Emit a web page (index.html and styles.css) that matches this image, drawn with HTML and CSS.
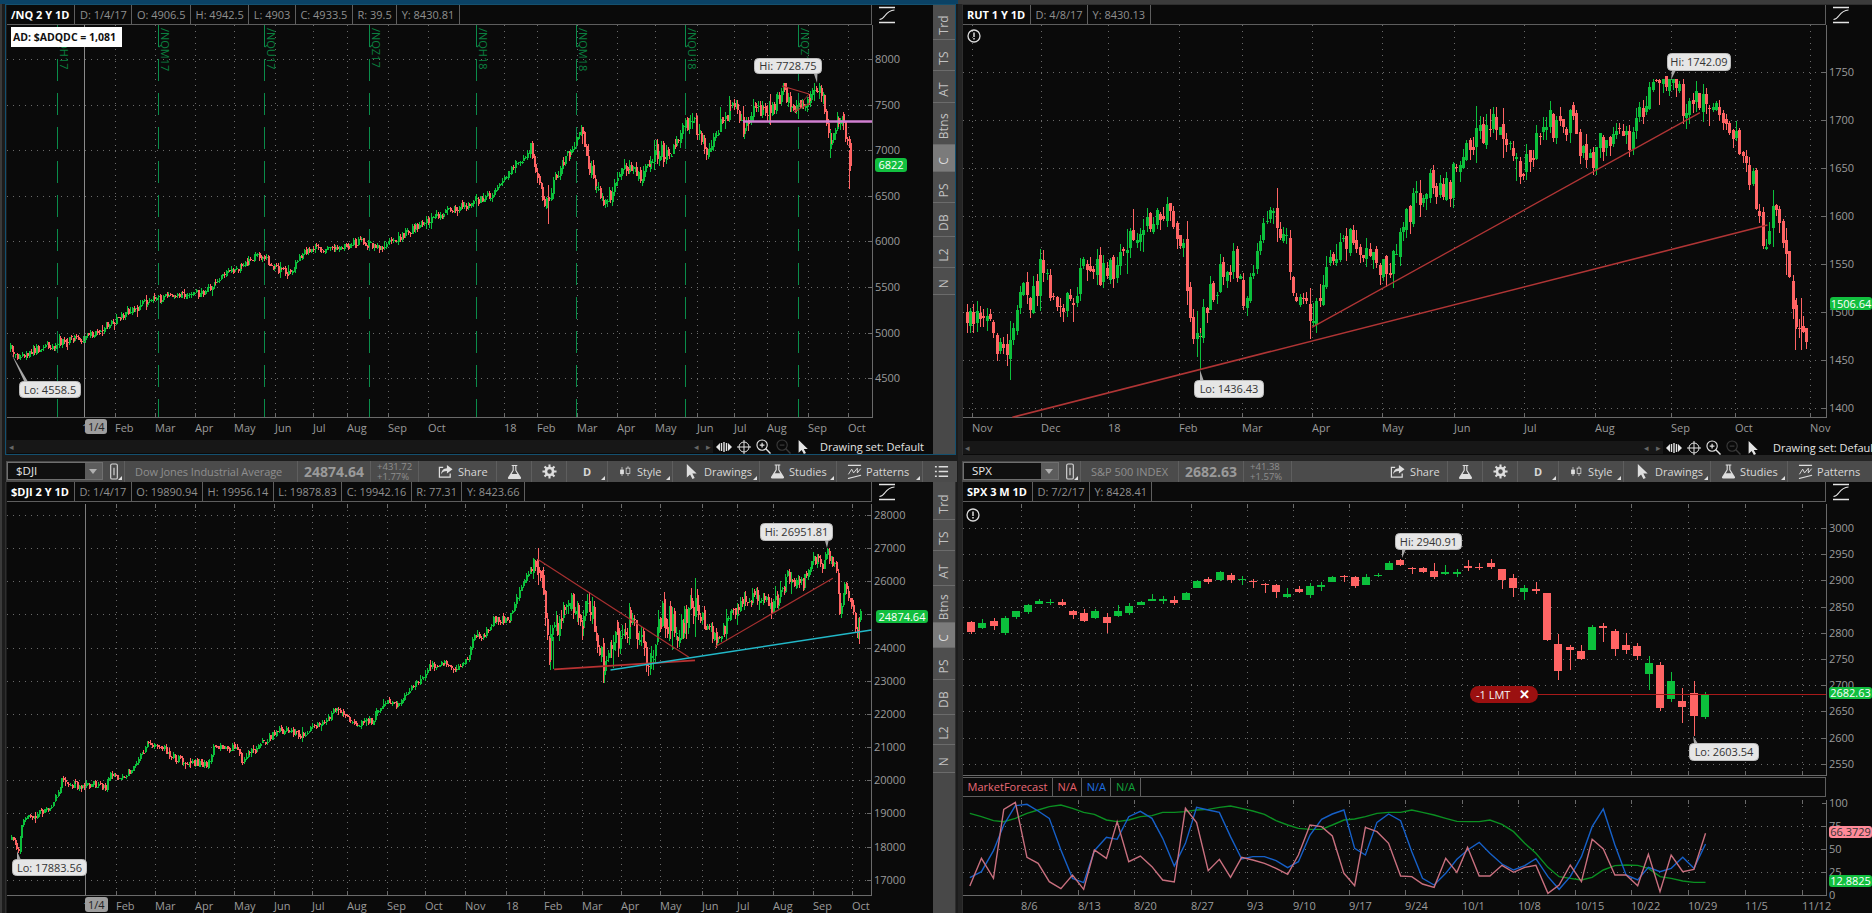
FILE: index.html
```html
<!DOCTYPE html>
<html lang="en">
<head>
<meta charset="utf-8">
<title>Charts</title>
<link rel="stylesheet" href="styles.css">
</head>
<body>
<svg class="sprite" aria-hidden="true">
  <symbol id="i-share" viewBox="0 0 16 16"><path d="M5.500 3.500H1.500v10.500h11.500v-4" fill="none" stroke="currentColor" stroke-width="1.300"/><path d="M9.500 1l6 4.500-6 4.500V7.500c-3 0-5 1-6.200 3.500.2-3.800 2.500-6.200 6.200-6.500z" fill="currentColor"/></symbol>
  <symbol id="i-flask" viewBox="0 0 16 16"><path d="M5 .5h6v1.200H10v4.300l4.800 7.600c.5.900 0 1.900-1 1.900H2.200c-1 0-1.500-1-1-1.900L6 6V1.700H5zM7.200 1.700v4.700L5 10h6L8.800 6.400V1.700z" fill="currentColor" fill-rule="evenodd"/><path d="M5 10h6l3 5H2z" fill="currentColor"/></symbol>
  <symbol id="i-gear" viewBox="0 0 16 16"><circle cx="8" cy="8" r="3.800" fill="none" stroke="currentColor" stroke-width="2.800"/><path d="M8 .5v3M8 12.500v3M.5 8h3M12.500 8h3M2.700 2.700l2.200 2.200M11.100 11.100l2.200 2.200M13.300 2.700l-2.200 2.200M4.900 11.100l-2.200 2.200" stroke="currentColor" stroke-width="2.200"/></symbol>
  <symbol id="i-candle" viewBox="0 0 16 16"><path d="M4 2v12M12 1v13" stroke="currentColor"/><rect x="1.500" y="5.500" width="5" height="6" fill="currentColor"/><rect x="9.500" y="3.500" width="5" height="7" fill="#4b4b4b" stroke="currentColor"/></symbol>
  <symbol id="i-cursor" viewBox="0 0 16 16"><path d="M3 0v14.500l3.500-3.200L9 16l2.400-1.200-2.500-4.600H13.500z" fill="currentColor"/></symbol>
  <symbol id="i-patterns" viewBox="0 0 16 16"><path d="M1 1.500h14M1 15.500l14-3.500" stroke="currentColor" stroke-width="1.200" fill="none"/><path d="M1.500 11L5 5.500l2 4L11 4.500v5l3.500-4.500" stroke="currentColor" fill="none"/></symbol>
  <symbol id="i-menu" viewBox="0 0 16 16"><path d="M1 3h2M1 8h2M1 13h2M5 3h10M5 8h10M5 13h10" stroke="currentColor" stroke-width="1.500"/></symbol>
  <symbol id="i-link" viewBox="0 0 10 18"><path d="M3 1h4a1.500 1.500 0 0 1 1.500 1.500v13A1.500 1.500 0 0 1 7 17H3a1.500 1.500 0 0 1-1.500-1.500v-13A1.500 1.500 0 0 1 3 1zM5 5v8" fill="none" stroke="currentColor" stroke-width="1.200"/></symbol>
  <symbol id="i-study" viewBox="0 0 18 18"><path d="M1 1.500h16M1 16.500h16" stroke="currentColor" stroke-width="1.600"/><path d="M1.500 13.500c6 0 5-9 15-9.500" fill="none" stroke="currentColor" stroke-width="1.200"/></symbol>
  <symbol id="i-arrows" viewBox="0 0 16 12"><path d="M0 6l4-4v8zM16 6l-4-4v8z" fill="currentColor"/><path d="M5.500 2v8M8 1v10M10.500 2v8" stroke="currentColor" stroke-width="1.400"/></symbol>
  <symbol id="i-cross" viewBox="0 0 14 14"><circle cx="7" cy="7" r="5" fill="none" stroke="currentColor"/><path d="M7 0v14M0 7h14" stroke="currentColor"/></symbol>
  <symbol id="i-zoomin" viewBox="0 0 16 16"><circle cx="6.500" cy="6.500" r="5.500" fill="none" stroke="currentColor" stroke-width="1.200"/><path d="M4 6.500h5M6.500 4v5" stroke="currentColor" stroke-width="1.300"/><path d="M10.500 10.500l5 5" stroke="currentColor" stroke-width="1.500"/></symbol>
  <symbol id="i-zoomout" viewBox="0 0 16 16"><circle cx="6.500" cy="6.500" r="5.500" fill="none" stroke="currentColor" stroke-width="1.200"/><path d="M4 6.500h5" stroke="currentColor" stroke-width="1.300"/><path d="M10.500 10.500l5 5" stroke="currentColor" stroke-width="1.500"/></symbol>
</svg>

<div class="app">

  <section class="panel panel-left panel-top">
    <div class="strip strip-active"></div>
    <div class="frame frame-active">
      <div class="main">
        <div class="infobar">
          <div class="cells">
            <span class="cell cell-name">/NQ 2 Y 1D</span><span class="cell">D: 1/4/17</span><span class="cell">O: 4906.5</span><span class="cell">H: 4942.5</span><span class="cell">L: 4903</span><span class="cell">C: 4933.5</span><span class="cell">R: 39.5</span><span class="cell">Y: 8430.81</span>
          </div>
          <div class="corner corner-wide"><svg class="study-icon"><use href="#i-study"/></svg></div>
        </div>
        <svg class="plot" id="chart-nq"></svg>
        <div class="statusbar">
          <div class="track"><span class="arrow">◂</span><span class="track-end"><span class="arrow">◂</span><span class="arrow">▸</span></span></div>
          <div class="status-tools">
            <svg class="st st-arrows"><use href="#i-arrows"/></svg>
            <svg class="st st-cross"><use href="#i-cross"/></svg>
            <svg class="st st-zoom"><use href="#i-zoomin"/></svg>
            <svg class="st st-zoom st-dim"><use href="#i-zoomout"/></svg>
            <svg class="st st-cur"><use href="#i-cursor"/></svg>
          </div>
          <span class="drawing-set">Drawing set: Default</span>
        </div>
      </div>
      <nav class="tabs tabs-top">
        <span class="tab"><b>Trd</b></span><span class="tab"><b>TS</b></span><span class="tab"><b>AT</b></span><span class="tab"><b>Btns</b></span><span class="tab tab-active"><b>C</b></span><span class="tab"><b>PS</b></span><span class="tab"><b>DB</b></span><span class="tab"><b>L2</b></span><span class="tab"><b>N</b></span>
      </nav>
    </div>
  </section>

  <section class="panel panel-right panel-top">
    <div class="strip"></div>
    <div class="frame">
      <div class="main">
        <div class="infobar">
          <div class="cells">
            <span class="cell cell-name">RUT 1 Y 1D</span><span class="cell">D: 4/8/17</span><span class="cell">Y: 8430.13</span>
          </div>
          <div class="corner"><svg class="study-icon"><use href="#i-study"/></svg></div>
        </div>
        <svg class="plot" id="chart-rut"></svg>
        <div class="statusbar">
          <div class="track"><span class="arrow">◂</span><span class="track-end"><span class="arrow">◂</span><span class="arrow">▸</span></span></div>
          <div class="status-tools">
            <svg class="st st-arrows"><use href="#i-arrows"/></svg>
            <svg class="st st-cross"><use href="#i-cross"/></svg>
            <svg class="st st-zoom"><use href="#i-zoomin"/></svg>
            <svg class="st st-zoom st-dim"><use href="#i-zoomout"/></svg>
            <svg class="st st-cur"><use href="#i-cursor"/></svg>
          </div>
          <span class="drawing-set">Drawing set: Default</span>
        </div>
      </div>
    </div>
  </section>

  <section class="panel panel-left panel-bottom">
    <div class="toolbar toolbar-left">
      <div class="symbol"><span class="symbol-text">$DJI</span><span class="symbol-drop"></span></div>
      <div class="link-cell"><svg class="link-icon"><use href="#i-link"/></svg></div>
      <div class="desc desc-long">Dow Jones Industrial Average</div>
      <div class="value">24874.64</div>
      <div class="change"><span>+431.72</span><span>+1.77%</span></div>
      <div class="tools tools-left">
        <div class="btn btn-share btn-share-wide"><svg class="ic"><use href="#i-share"/></svg>Share</div>
        <div class="btn btn-icon"><svg class="ic ic-big"><use href="#i-flask"/></svg></div>
        <div class="btn btn-icon"><svg class="ic"><use href="#i-gear"/></svg></div>
        <div class="btn btn-d more">D</div>
        <div class="btn btn-style more"><svg class="ic"><use href="#i-candle"/></svg>Style</div>
        <div class="btn btn-draw more"><svg class="ic"><use href="#i-cursor"/></svg>Drawings</div>
        <div class="btn btn-studies more"><svg class="ic"><use href="#i-flask"/></svg>Studies</div>
        <div class="btn btn-patterns more"><svg class="ic"><use href="#i-patterns"/></svg>Patterns</div>
        <div class="btn btn-menu"><svg class="ic"><use href="#i-menu"/></svg></div>
      </div>
    </div>
    <div class="frame">
      <div class="main">
        <div class="infobar">
          <div class="cells">
            <span class="cell cell-name">$DJI 2 Y 1D</span><span class="cell">D: 1/4/17</span><span class="cell">O: 19890.94</span><span class="cell">H: 19956.14</span><span class="cell">L: 19878.83</span><span class="cell">C: 19942.16</span><span class="cell">R: 77.31</span><span class="cell">Y: 8423.66</span>
          </div>
          <div class="corner corner-wide"><svg class="study-icon"><use href="#i-study"/></svg></div>
        </div>
        <svg class="plot" id="chart-dji"></svg>
      </div>
      <nav class="tabs tabs-bottom">
        <span class="tab"><b>Trd</b></span><span class="tab"><b>TS</b></span><span class="tab"><b>AT</b></span><span class="tab"><b>Btns</b></span><span class="tab tab-active"><b>C</b></span><span class="tab"><b>PS</b></span><span class="tab"><b>DB</b></span><span class="tab"><b>L2</b></span><span class="tab"><b>N</b></span>
      </nav>
    </div>
  </section>

  <section class="panel panel-right panel-bottom">
    <div class="toolbar toolbar-right">
      <div class="symbol"><span class="symbol-text">SPX</span><span class="symbol-drop"></span></div>
      <div class="link-cell"><svg class="link-icon"><use href="#i-link"/></svg></div>
      <div class="desc desc-short">S&amp;P 500 INDEX</div>
      <div class="value">2682.63</div>
      <div class="change"><span>+41.38</span><span>+1.57%</span></div>
      <div class="tools tools-right">
        <div class="btn btn-share"><svg class="ic"><use href="#i-share"/></svg>Share</div>
        <div class="btn btn-icon"><svg class="ic ic-big"><use href="#i-flask"/></svg></div>
        <div class="btn btn-icon"><svg class="ic"><use href="#i-gear"/></svg></div>
        <div class="btn btn-d more">D</div>
        <div class="btn btn-style more"><svg class="ic"><use href="#i-candle"/></svg>Style</div>
        <div class="btn btn-draw more"><svg class="ic"><use href="#i-cursor"/></svg>Drawings</div>
        <div class="btn btn-studies more"><svg class="ic"><use href="#i-flask"/></svg>Studies</div>
        <div class="btn btn-patterns"><svg class="ic"><use href="#i-patterns"/></svg>Patterns</div>
      </div>
    </div>
    <div class="frame">
      <div class="main">
        <div class="infobar">
          <div class="cells">
            <span class="cell cell-name">SPX 3 M 1D</span><span class="cell">D: 7/2/17</span><span class="cell">Y: 8428.41</span>
          </div>
          <div class="corner"><svg class="study-icon"><use href="#i-study"/></svg></div>
        </div>
        <svg class="plot plot-price" id="chart-spx"></svg>
        <div class="study-head">
          <div class="cells">
            <span class="cell mf-pink">MarketForecast</span><span class="cell mf-red">N/A</span><span class="cell mf-blue">N/A</span><span class="cell mf-green">N/A</span>
          </div>
          <div class="corner"></div>
        </div>
        <svg class="plot" id="chart-mf"></svg>
      </div>
    </div>
  </section>

</div>
<script src="charts.js"></script>
</body>
</html>
```

FILE: styles.css
```css
* { box-sizing: border-box; }
html, body { margin: 0; height: 100%; }
body {
  width: 1872px;
  height: 913px;
  overflow: hidden;
  background: #262626;
  font-family: "Open Sans", "Liberation Sans", sans-serif;
  font-size: 11px;
  color: #8f8f8f;
}
.sprite { display: none; }

.app {
  display: grid;
  grid-template-columns: 958px 914px;
  grid-template-rows: 457px 456px;
  width: 1872px;
  height: 913px;
}

.panel { display: flex; flex-direction: column; min-width: 0; min-height: 0; overflow: hidden; }
.panel-left { padding: 0 2px 2px 5px; background: linear-gradient(90deg, #3a3a3a 0 2px, #1c1c1c 2px); }
.panel-right { padding: 0 0 2px 4px; background: #242424; }
.panel-bottom { padding-top: 4px; padding-bottom: 0; }

.strip { flex: 0 0 4px; background: #3b3b3b; margin-left: -5px; margin-right: -2px; }
.strip-active { background: #0b4265; }

.frame {
  flex: 1;
  display: flex;
  min-height: 0;
  border-left: 1px solid #2e2e2e;
  border-top: 1px solid #2e2e2e;
}
.panel-left .frame { padding-left: 1px; border-right: 1px solid #2e2e2e; }
.panel-bottom .frame { border-top: 0; }
.frame-active { border: 1px solid #14506f; }
.panel-left .frame-active { border-right-color: #14506f; }

.main { flex: 1; min-width: 0; display: flex; flex-direction: column; background: #0a0a0a; }

/* info strip above each plot */
.infobar, .study-head { display: flex; flex: 0 0 20px; }
.study-head { background: #0a0a0a; }
.cells {
  flex: 1;
  display: flex;
  align-items: stretch;
  line-height: 19px;
  border-bottom: 1px solid #5e5e5e;
  border-right: 1px solid #5e5e5e;
  white-space: nowrap;
}
.study-head .cells { border-top: 1px solid #5e5e5e; line-height: 18px; }
.cell { padding: 0 4.5px; border-right: 1px solid #5e5e5e; letter-spacing: 0; }
.cell-name { padding: 0 5px 0 4px; color: #fff; font-weight: 700; }
.corner { flex: 0 0 46px; padding: 1px 0 0 6px; }
.corner-wide { flex-basis: 61px; }
.study-icon { display: block; width: 18px; height: 18px; color: #e4e4e4; }

.mf-pink { color: #e96b78; }
.mf-red { color: #e5606b; }
.mf-blue { color: #1f6fe0; }
.mf-green { color: #12a43a; }

.plot { display: block; flex: 1; width: 100%; min-height: 0; }
.plot-price { flex: 0 0 275px; }

/* scroll strip */
.statusbar {
  flex: 0 0 15px;
  display: flex;
  align-items: center;
  white-space: nowrap;
  overflow: hidden;
  color: #e4e4e4;
}
.track {
  flex: 1;
  height: 13px;
  display: flex;
  justify-content: space-between;
  align-items: center;
  padding: 0 2px;
  background: #171717;
  color: #666;
  font-size: 9px;
  line-height: 13px;
}
.track-end { display: flex; gap: 7px; }
.status-tools { display: flex; align-items: center; gap: 5px; padding: 0 10px 0 3px; }
.st { display: block; flex: none; }
.st-arrows { width: 16px; height: 12px; }
.st-cross { width: 14px; height: 14px; }
.st-zoom { width: 15px; height: 15px; }
.st-dim { color: #3a3a3a; }
.st-cur { width: 14px; height: 14px; }
.drawing-set { flex: none; padding-right: 9px; line-height: 15px; }
.panel-right .drawing-set { flex-basis: 99px; overflow: hidden; padding-right: 0; margin-left: 3px; }

/* tab column */
.tabs {
  flex: 0 0 22px;
  display: grid;
  background: #484848;
  align-content: start;
  color: #c2c2c2;
  font-size: 12px;
}
.tabs-top { grid-template-rows: 35px 31px 32px 42px 27px 31px 34px 31px 27px; }
.tabs-bottom { grid-template-rows: 38px 31px 35px 37px 25px 32px 35px 30px 28px; }
.tab {
  display: flex;
  align-items: center;
  justify-content: center;
  padding-top: 6px;
  border-bottom: 1px solid #6b6b6b;
  background: #4e4e4e;
}
.tab b {
  font-weight: 400;
  writing-mode: vertical-rl;
  transform: rotate(180deg);
  letter-spacing: .3px;
  line-height: 22px;
}
.tab-active { background: #7b7b7b; color: #ddd; }

/* toolbars */
.toolbar {
  flex: 0 0 21px;
  display: flex;
  align-items: stretch;
  background: #4b4b4b;
  color: #d8d8d8;
  white-space: nowrap;
  overflow: hidden;
}
.toolbar-left { margin: 0 -1px 0 1px; }
.symbol {
  flex: 0 0 96px;
  height: 18px;
  margin: 1px 0 0 1px;
  display: flex;
  justify-content: space-between;
  background: #101010;
  border: 1px solid #6f6f6f;
  color: #e8e8e8;
  line-height: 16px;
  font-size: 11.5px;
}
.symbol-text { padding-left: 8px; }
.symbol-drop { position: relative; flex: 0 0 17px; background: #5c5c5c; }
.symbol-drop::after {
  content: "";
  position: absolute;
  left: 4px;
  top: 6px;
  border: 4px solid transparent;
  border-top: 5px solid #b0b0b0;
  border-bottom: 0;
}
.link-cell { position: relative; flex: 0 0 22px; padding: 2px 0 0 6px; border-right: 1px solid #5e5e5e; }
.link-cell::after, .more::after {
  content: "";
  position: absolute;
  right: 2px;
  bottom: 2px;
  border-style: solid;
  border-width: 0 0 4px 4px;
  border-color: transparent transparent #e0e0e0 transparent;
}
.link-icon { display: block; width: 10px; height: 17px; color: #d8d8d8; }
.desc { padding: 0 10px 0 10px; line-height: 21px; color: #8e8e8e; border-right: 1px solid #5e5e5e; }
.desc-long { font-size: 11px; flex: 0 0 173px; letter-spacing: -.08px; }
.desc-short { font-size: 11px; flex: 0 0 93px; }
.value { padding: 0 6px; line-height: 21px; font-size: 14px; font-weight: 700; color: #9a9a9a; border-right: 1px solid #5e5e5e; }
.change {
  display: flex;
  flex-direction: column;
  justify-content: center;
  padding: 0 6px;
  font-size: 9.5px;
  line-height: 9.5px;
  color: #8e8e8e;
  border-right: 1px solid #5e5e5e;
  min-width: 48px;
}
.tools { display: flex; align-items: stretch; }
.tools-left { margin-left: 0; }
.tools-right { margin-left: 88px; }
.btn {
  position: relative;
  flex: none;
  display: flex;
  align-items: center;
  gap: 5px;
  padding-left: 10px;
  line-height: 21px;
  border-right: 1px solid #5e5e5e;
}
.ic { display: block; flex: none; width: 15px; height: 15px; color: #dedede; }
.ic-big { width: 15px; height: 16px; }
.btn-share { width: 68px; }
.btn-share-wide { width: 78px; padding-left: 19px; }
.btn-icon { width: 35px; justify-content: center; padding-left: 0; }
.btn-d { width: 41px; justify-content: center; padding-left: 0; font-weight: 700; }
.btn-style { width: 65px; gap: 6px; padding-left: 11px; }
.btn-style .ic { width: 12px; }
.btn-draw { width: 87px; padding-left: 11px; gap: 5px; }
.btn-studies { width: 77px; padding-left: 10px; gap: 4px; }
.btn-patterns { width: 86px; padding-left: 10px; gap: 4px; border-right: 1px solid #5e5e5e; }
.btn-menu { width: 36px; justify-content: center; padding-left: 0; border-right: 0; }

/* svg text */
.ax { font: 11px "Open Sans", "Liberation Sans", sans-serif; fill: #9b9b9b; }
.tick-txt { font: 11px "Open Sans", "Liberation Sans", sans-serif; fill: #9b9b9b; }
.bub { font: 11px "Open Sans", "Liberation Sans", sans-serif; fill: #333; text-anchor: middle; }
.tagt { font: 11px "Open Sans", "Liberation Sans", sans-serif; text-anchor: middle; }
.exp { font: 11px "Open Sans", "Liberation Sans", sans-serif; fill: #0b8040; }
.ad { font: 700 10.500px "Open Sans", "Liberation Sans", sans-serif; fill: #111; }
.lmt { font: 11px "Open Sans", "Liberation Sans", sans-serif; fill: #f4f4f4; }
.lmtx { font: 700 13px "Open Sans", "Liberation Sans", sans-serif; fill: #fff; }
```

FILE: charts.js
```js
const NS = 'http://www.w3.org/2000/svg';
const GREEN = '#0cc03c', RED = '#ff6464';

function el(parent, tag, attrs, text) {
  const n = document.createElementNS(NS, tag);
  for (const k in attrs) n.setAttribute(k, attrs[k]);
  if (text !== undefined) n.textContent = text;
  parent.appendChild(n);
  return n;
}
function open(id) {
  const svg = document.getElementById(id);
  const r = svg.getBoundingClientRect();
  svg.setAttribute('viewBox', `${r.left} ${r.top} ${r.width} ${r.height}`);
  return svg;
}
const Z = (sx, ox, oy) => p => [ox + p[0] / sx, oy + p[1] / 3];
function rng(seed) { return () => (seed = (seed * 16807) % 2147483647) / 2147483647; }

function frame(svg, c) {
  const grid = el(svg, 'g', { stroke: '#6a6a6a', 'stroke-dasharray': '1 5' });
  c.ys.forEach(y => {
    if (y[2] !== false) el(grid, 'line', { x1: c.l, x2: c.r, y1: y[0] + .5, y2: y[0] + .5 });
  });
  c.xs.forEach(x => el(grid, 'line', { x1: x[0] + .5, x2: x[0] + .5, y1: c.t, y2: c.b }));
  const solid = el(svg, 'g', { stroke: '#6a6a6a', 'shape-rendering': 'crispEdges' });
  el(solid, 'line', { x1: c.r + .5, x2: c.r + .5, y1: c.t, y2: c.b + 1 });
  el(solid, 'line', { x1: c.l, x2: c.r, y1: c.b + .5, y2: c.b + .5 });
  c.xs.forEach(x => {
    el(solid, 'line', { x1: x[0] + .5, x2: x[0] + .5, y1: c.b - 4, y2: c.b });
    if (c.topTicks) el(solid, 'line', { x1: x[0] + .5, x2: x[0] + .5, y1: c.t, y2: c.t + 4 });
  });
  c.ys.forEach(y => {
    el(solid, 'line', { x1: c.r - 4, x2: c.r, y1: y[0] + .5, y2: y[0] + .5 });
    if (y[1]) el(svg, 'text', { class: 'ax', x: c.r + 3, y: y[0] + 4 }, y[1]);
  });
  if (!c.noLabels) c.xs.forEach(x => {
    if (x[1]) el(svg, 'text', { class: 'tick-txt', x: x[0], y: c.b + 15 }, x[1]);
  });
}

function interp(path, x) {
  for (let i = 1; i < path.length; i++) {
    if (x <= path[i][0]) {
      const a = path[i - 1], b = path[i];
      return a[1] + (b[1] - a[1]) * (x - a[0]) / Math.max(b[0] - a[0], .001);
    }
  }
  return path[path.length - 1][1];
}

function candles(svg, o) {
  const r = rng(o.seed);
  let g = '', d = '', gw = '', dw = '';
  const vol = x => { for (const v of o.vol) if (x < v[0]) return v[1]; return 1; };
  const start = o.path[0][0], end = o.path[o.path.length - 1][0];
  let prev = o.path[0][1];
  for (let x = start; x <= end; x += o.pitch) {
    const v = vol(x);
    const base = interp(o.path, x);
    const close = Math.max(o.minY, base + (r() - .5) * v);
    const openY = prev + (r() - .5) * v * .3;
    const top = Math.min(close, openY), bot = Math.max(Math.max(close, openY), top + 1);
    const spike = r() < .12 ? 2.2 : 1;
    const hi = Math.max(o.minY, top - r() * v * .35 * spike), lo = bot + r() * v * .35 * spike;
    const px = Math.round(x);
    const up = close < openY;
    const body = `M${px} ${top.toFixed(1)}h${o.w}V${bot.toFixed(1)}h-${o.w}z`;
    const wickX = px + (o.w > 2 ? 1 : 0);
    const wick = `M${wickX} ${hi.toFixed(1)}h1V${lo.toFixed(1)}h-1z`;
    if (up) { g += body; gw += wick; } else { d += body; dw += wick; }
    prev = close;
  }
  el(svg, 'path', { d: gw + g, fill: GREEN, 'shape-rendering': 'crispEdges' });
  el(svg, 'path', { d: dw + d, fill: RED, 'shape-rendering': 'crispEdges' });
}
function wick(svg, x, y1, y2, fill) {
  el(svg, 'rect', { x, y: y1, width: 1, height: y2 - y1, fill, 'shape-rendering': 'crispEdges' });
}

function bubble(svg, x1, y1, x2, y2, text, px, py) {
  const onTop = py < y1;
  const cx = Math.max(x1 + 5, Math.min(x2 - 8, px));
  const edge = onTop ? y1 : y2;
  el(svg, 'polygon', { points: `${cx} ${edge} ${cx + 3.500} ${edge} ${px} ${py}`, fill: '#a8a8a8' });
  el(svg, 'rect', { x: x1 + .5, y: y1 + .5, width: x2 - x1 - 1, height: y2 - y1 - 1, rx: 4, fill: '#e6e6e6', stroke: '#bdbdbd' });
  el(svg, 'text', { class: 'bub', x: (x1 + x2) / 2, y: (y1 + y2) / 2 + 4 }, text);
}
function tag(svg, x1, y1, x2, y2, text, fill, color) {
  el(svg, 'rect', { x: x1, y: y1, width: x2 - x1, height: y2 - y1, rx: 3, fill });
  el(svg, 'text', { class: 'tagt', x: (x1 + x2) / 2, y: (y1 + y2) / 2 + 4, fill: color }, text);
}
function trend(svg, a, b, color, w) {
  el(svg, 'line', { x1: a[0], y1: a[1], x2: b[0], y2: b[1], stroke: color, 'stroke-width': w });
}
function dateTag(svg, x, y, w, h) {
  el(svg, 'rect', { x, y, width: w, height: h, rx: 3, fill: '#9e9e9e' });
  el(svg, 'text', { class: 'tick-txt', x: x + 3, y: y + h - 3.500, style: 'fill:#222' }, '1/4');
}
function alert(svg, x, y) {
  el(svg, 'circle', { cx: x, cy: y, r: 6, fill: 'none', stroke: '#dcdcdc', 'stroke-width': 1.300 });
  el(svg, 'path', { d: `M${x} ${y - 3.500}v4.500M${x} ${y + 2}v1.500`, stroke: '#dcdcdc', 'stroke-width': 1.500 });
}

/* ---------- /NQ ---------- */
(function () {
  const svg = open('chart-nq');
  const yOf = p => 59 + (8000 - p) * .0912;
  const months = [[84, ''], [115, 'Feb'], [155, 'Mar'], [195, 'Apr'], [234, 'May'], [275, 'Jun'], [313, 'Jul'], [347, 'Aug'], [388, 'Sep'], [428, 'Oct'], [504, '18'], [537, 'Feb'], [577, 'Mar'], [617, 'Apr'], [655, 'May'], [697, 'Jun'], [734, 'Jul'], [767, 'Aug'], [808, 'Sep'], [848, 'Oct']];
  const ys = [];
  for (let p = 8000; p >= 4500; p -= 500) ys.push([Math.round(yOf(p)), String(p)]);
  frame(svg, { l: 7, r: 872, t: 25, b: 417, xs: months, ys });
  [[57, '/NQH17'], [158, '/NQM17'], [264, '/NQU17'], [369, '/NQZ17'], [476, '/NQH18'], [576, '/NQM18'], [685, '/NQU18'], [798, '/NQZ18']].forEach(e => {
    el(svg, 'line', { x1: e[0] + .5, x2: e[0] + .5, y1: 25, y2: 417, stroke: '#0a8c4a', 'stroke-dasharray': '22 12' });
    el(svg, 'text', { class: 'exp', x: e[0] + 3, y: 28, transform: `rotate(90 ${e[0] + 3} 28)` }, e[1]);
  });
  el(svg, 'line', { x1: 84.5, x2: 84.5, y1: 25, y2: 417, stroke: '#8a8a8a' });
  candles(svg, {
    seed: 4711, pitch: 1.74, w: 2, minY: 83, vol: [[530, 8], [900, 16]],
    path: [[10, 349], [18, 358], [26, 353], [48, 346], [72, 340], [86, 337], [107, 325], [125, 313], [149, 301], [173, 295], [203, 293], [221, 277], [245, 265], [260, 254], [269, 263], [287, 275], [304, 251], [340, 247], [358, 242], [382, 248], [406, 233], [442, 212], [472, 203], [490, 195], [507, 173], [531, 149], [543, 203], [561, 167], [581, 134], [593, 179], [605, 203], [627, 167], [640, 177], [647, 167], [653, 153], [673, 150], [682, 130], [692, 122], [702, 143], [707, 148], [717, 130], [728, 112], [737, 105], [742, 132], [753, 107], [765, 117], [773, 110], [783, 88], [790, 112], [800, 100], [805, 105], [817, 85], [822, 92], [827, 130], [830, 148], [837, 120], [842, 118], [847, 140], [850, 160], [852, 172]]
  });
  wick(svg, 548, 185, 224, RED);
  wick(svg, 830, 130, 158, GREEN);
  wick(svg, 849, 150, 189, RED);
  el(svg, 'line', { x1: 743, y1: 121.5, x2: 872, y2: 121.5, stroke: '#d17fd1', 'stroke-width': 2.500 });
  const rd = '#b03535';
  trend(svg, [782, 86], [809, 94], rd, 1.200);
  trend(svg, [794, 112], [810, 103], rd, 1.200);
  trend(svg, [794, 112], [809, 94], rd, .8);
  bubble(svg, 754, 58, 822, 74, 'Hi: 7728.75', 817, 83);
  bubble(svg, 19, 381, 81, 398, 'Lo: 4558.5', 11, 353);
  tag(svg, 875, 158, 907, 172, '6822', '#12bf3f', '#fff');
  el(svg, 'rect', { x: 11, y: 27, width: 111, height: 20, fill: '#fff' });
  el(svg, 'text', { class: 'ad', x: 13, y: 41 }, 'AD: $ADQDC = 1,081');
  el(svg, 'text', { class: 'tick-txt', x: 82, y: 432 }, '1');
  dateTag(svg, 85, 419, 22, 15);
})();

/* ---------- RUT ---------- */
(function () {
  const svg = open('chart-rut');
  const T = Z(1.719, 960, 60);
  const ys = [];
  for (let p = 1750; p >= 1400; p -= 50) ys.push([Math.round(71.7 + (1750 - p) * .96), String(p)]);
  const xs = [[972, 'Nov'], [1041, 'Dec'], [1108, '18'], [1179, 'Feb'], [1242, 'Mar'], [1312, 'Apr'], [1382, 'May'], [1454, 'Jun'], [1524, 'Jul'], [1595, 'Aug'], [1671, 'Sep'], [1735, 'Oct'], [1810, 'Nov']];
  frame(svg, { l: 963, r: 1826, t: 25, b: 417, xs, ys });
  const raw = [[10, 770], [28, 775], [50, 820], [80, 865], [90, 780], [100, 705], [125, 705], [135, 630], [150, 670], [160, 720], [190, 730], [205, 620], [255, 640], [285, 570], [300, 510], [325, 480], [340, 440], [365, 500], [382, 560], [390, 780], [405, 850], [430, 700], [445, 640], [470, 590], [485, 720], [500, 620], [525, 470], [560, 540], [575, 700], [605, 770], [625, 640], [670, 530], [700, 600], [725, 630], [740, 600], [760, 480], [810, 370], [835, 395], [870, 250], [925, 170], [945, 290], [965, 350], [990, 220], [1000, 170], [1030, 230], [1045, 180], [1080, 300], [1105, 230], [1150, 260], [1175, 120], [1220, 65], [1240, 130], [1270, 130], [1295, 130], [1325, 200], [1340, 300], [1365, 390], [1380, 620], [1395, 480], [1405, 490], [1425, 670], [1432, 835], [1445, 770], [1455, 815]];
  candles(svg, { seed: 90210, pitch: 3.33, w: 3, minY: 79, vol: [[2000, 30]], path: raw.map(T) });
  const a = T([412, 820]), b = T([412, 930]);
  wick(svg, Math.round(a[0]), a[1], b[1], GREEN);
  wick(svg, 1795, 300, 350, RED);
  wick(svg, 1801, 298, 350, RED);
  const rd = '#b03535';
  trend(svg, T([605, 802]), T([1272, 158]), rd, 1.300);
  trend(svg, T([90, 1072]), T([1388, 495]), rd, 1.600);
  bubble(svg, 1667, 53, 1731, 71, 'Hi: 1742.09', 1671, 80);
  bubble(svg, 1194, 380, 1264, 398, 'Lo: 1436.43', 1200, 370);
  tag(svg, 1830, 297, 1872, 310, '1506.64', '#12bf3f', '#fff');
  alert(svg, 974, 36);
})();

/* ---------- $DJI ---------- */
(function () {
  const svg = open('chart-dji');
  const T = Z(1.633, 0, 510);
  const ys = [];
  for (let p = 28000; p >= 17000; p -= 1000) ys.push([Math.round(515 + (28000 - p) * .03315), p === 25000 ? '' : String(p)]);
  const xs = [[85, ''], [116, 'Feb'], [155, 'Mar'], [195, 'Apr'], [234, 'May'], [274, 'Jun'], [312, 'Jul'], [347, 'Aug'], [387, 'Sep'], [425, 'Oct'], [465, 'Nov'], [506, '18'], [544, 'Feb'], [582, 'Mar'], [621, 'Apr'], [660, 'May'], [702, 'Jun'], [737, 'Jul'], [773, 'Aug'], [813, 'Sep'], [852, 'Oct']];
  frame(svg, { l: 7, r: 871, t: 504, b: 895, xs, ys, topTicks: true });
  el(svg, 'line', { x1: 85.5, x2: 85.5, y1: 504, y2: 895, stroke: '#7d7d7d' });
  const raw = [[18, 990], [30, 1020], [35, 950], [42, 920], [60, 915], [85, 885], [100, 815], [130, 830], [160, 820], [170, 835], [180, 800], [205, 800], [240, 700], [270, 720], [285, 745], [340, 765], [348, 710], [385, 715], [395, 750], [440, 680], [455, 660], [490, 675], [510, 650], [525, 645], [548, 597], [575, 645], [610, 630], [615, 600], [635, 570], [650, 585], [690, 495], [700, 470], [725, 455], [745, 485], [765, 430], [775, 370], [785, 395], [805, 330], [830, 330], [855, 210], [878, 150], [885, 205], [895, 430], [915, 320], [932, 235], [945, 360], [958, 270], [985, 450], [1000, 400], [1028, 330], [1045, 400], [1060, 450], [1080, 320], [1110, 370], [1130, 275], [1150, 340], [1170, 400], [1195, 310], [1220, 260], [1240, 255], [1260, 300], [1285, 200], [1310, 225], [1330, 140], [1340, 175], [1352, 130], [1365, 170], [1370, 320], [1378, 235], [1390, 290], [1397, 360], [1405, 320]];
  candles(svg, { seed: 2718, pitch: 1.74, w: 2, minY: 548, vol: [[533, 7], [705, 28], [900, 14]], path: raw.map(T) });
  wick(svg, 553, 637, 669, GREEN);
  wick(svg, 859, 617, 644, RED);
  trend(svg, T([878, 148]), T([1125, 442]), '#a83030', 1.200);
  trend(svg, T([905, 478]), T([1135, 451]), '#b83232', 1.600);
  trend(svg, T([1168, 410]), T([1360, 205]), '#a83030', 1.200);
  trend(svg, T([997, 480]), T([1423, 360]), '#22b8c8', 1.600);
  bubble(svg, 760, 523, 833, 541, 'Hi: 26951.81', 827, 548);
  bubble(svg, 12, 859, 87, 876, 'Lo: 17883.56', 17, 851);
  tag(svg, 876, 610, 928, 623, '24874.64', '#12bf3f', '#fff');
  el(svg, 'text', { class: 'tick-txt', x: 83, y: 910 }, '1');
  dateTag(svg, 85, 897, 23, 15);
})();

/* ---------- SPX ---------- */
const SPX_TICKS = [[1021, '8/6'], [1078, '8/13'], [1134, '8/20'], [1191, '8/27'], [1247, '9/3'], [1293, '9/10'], [1349, '9/17'], [1405, '9/24'], [1462, '10/1'], [1518, '10/8'], [1575, '10/15'], [1631, '10/22'], [1688, '10/29'], [1745, '11/5'], [1802, '11/12']];
(function () {
  const svg = open('chart-spx');
  const ys = [];
  for (let p = 3000; p >= 2550; p -= 50) ys.push([Math.round(528 + (3000 - p) * .524), String(p)]);
  frame(svg, { l: 963, r: 1826, t: 504, b: 775, xs: SPX_TICKS, ys, noLabels: true, topTicks: true });
  const C = [[336,366,333,371,'r'],[339,354,328,356,'g'],[333,348,325,360,'r'],[324,370,318,375,'g'],[304,321,302,327,'g'],[285,305,283,311,'g'],[274,281,267,283,'g'],[275,277,267,285,'g'],[277,285,267,288,'r'],[303,315,300,327,'r'],[309,333,297,335,'r'],[303,324,297,326,'g'],[321,339,310,368,'r'],[303,318,285,320,'g'],[288,309,278,315,'g'],[276,284,273,286,'g'],[267,272,252,274,'g'],[267,272,258,281,'g'],[270,279,258,285,'r'],[249,269,247,271,'g'],[213,233,211,235,'g'],[207,216,202,221,'r'],[186,209,183,212,'g'],[195,209,188,219,'r'],[207,211,197,224,'g'],[212,215,207,234,'r'],[222,226,220,249,'r'],[225,245,222,263,'r'],[252,261,234,265,'g'],[237,245,228,248,'r'],[228,255,220,263,'g'],[225,230,216,243,'g'],[201,215,198,217,'g'],[198,202,195,217,'r'],[201,228,198,233,'r'],[201,224,192,226,'g'],[195,199,189,202,'g'],[160,179,154,181,'g'],[150,164,148,167,'r'],[174,178,170,192,'r'],[174,186,170,188,'r'],[183,201,159,207,'r'],[186,191,165,196,'g'],[186,193,177,200,'g'],[168,174,150,183,'r'],[171,174,159,180,'r'],[159,171,147,177,'r'],[177,209,177,237,'r'],[204,234,192,261,'r'],[234,245,225,270,'g'],[237,242,216,252,'r'],[249,390,249,393,'r'],[402,483,372,510,'r'],[411,419,405,480,'r'],[423,447,405,450,'r'],[351,420,346,420,'g'],[348,354,339,396,'r'],[363,417,357,438,'r'],[405,420,369,432,'r'],[408,438,399,450,'r'],[459,492,438,540,'g'],[465,593,457,603,'r'],[513,567,486,575,'g'],[573,591,534,638,'r'],[549,618,513,678,'r'],[555,621,546,627,'g']];
  const g = el(svg, 'g', { 'shape-rendering': 'crispEdges' });
  C.forEach((c, i) => {
    const x = Math.round(971.2 + 11.29 * i);
    const fill = c[4] === 'g' ? GREEN : RED;
    const y = v => 510 + v / 3;
    el(g, 'rect', { x, y: y(c[2]), width: 1, height: (c[3] - c[2]) / 3, fill });
    el(g, 'rect', { x: x - 4, y: y(c[0]), width: 8, height: Math.max(1, (c[1] - c[0]) / 3), fill });
  });
  el(svg, 'line', { x1: 1537, x2: 1826, y1: 694.5, y2: 694.5, stroke: '#a81a1a' });
  el(svg, 'rect', { x: 1470, y: 686, width: 68, height: 17, rx: 8.500, fill: '#9b1010' });
  el(svg, 'text', { class: 'lmt', x: 1476, y: 698.500 }, '-1 LMT');
  el(svg, 'text', { class: 'lmtx', x: 1519, y: 699 }, '✕');
  bubble(svg, 1395, 533, 1462, 550, 'Hi: 2940.91', 1402, 558);
  bubble(svg, 1689, 743, 1759, 761, 'Lo: 2603.54', 1693, 736);
  tag(svg, 1829, 687, 1872, 699, '2682.63', '#12bf3f', '#fff');
  alert(svg, 973, 515);
})();

(function () {
  const svg = open('chart-mf');
  const T = Z(2.24, 960, 510);
  const X = [22,48,75,98,124,150,175,200,226,252,277,301,328,352,378,404,430,454,480,505,530,556,581,606,631,656,682,708,734,758,784,810,834,860,884,908,934,960,987,1012,1036,1062,1088,1113,1137,1163,1187,1214,1240,1265,1290,1317,1342,1367,1392,1416,1441,1467,1492,1518,1542,1568,1593,1619,1644,1670];
  const pink = [1128,1045,1105,898,877,1042,1060,1115,1136,1095,1138,1020,1045,935,1055,1038,1070,1110,1116,895,938,1082,1048,1102,1042,1050,1060,1075,1093,1035,945,950,978,1090,1127,952,965,1000,1098,1100,1122,1132,1045,1087,1012,1098,1098,1066,1087,1072,1066,1150,1125,1065,1115,988,1017,1095,1095,1127,1033,1145,1035,1085,1078,970];
  const blue = [1103,1085,1022,945,887,883,903,925,1020,1105,1118,1022,982,988,920,904,925,985,1068,1000,892,900,907,980,1047,1040,1040,1052,1073,1055,975,928,912,900,1015,1035,937,912,932,1025,1105,1125,1090,1048,1020,997,1030,1062,1080,1067,1046,1100,1138,1100,1040,950,897,1005,1095,1110,1072,1085,1075,1042,1075,1002];
  const green = [910,920,932,935,925,910,900,890,885,895,907,913,930,935,930,920,917,907,907,905,900,898,892,888,895,903,913,932,945,955,958,958,945,930,927,920,910,907,907,900,907,915,925,934,935,935,930,943,965,1000,1030,1072,1100,1105,1110,1102,1080,1067,1065,1066,1075,1100,1105,1113,1117,1117];
  const ys = [[803, '100', false], [826, '75'], [849, '50'], [872, '25'], [895, '0', false]];
  frame(svg, { l: 963, r: 1826, t: 800, b: 895, xs: SPX_TICKS, ys, topTicks: true });
  const line = (vals, color) => el(svg, 'polyline', { points: vals.map((v, i) => T([X[i], v]).join(',')).join(' '), fill: 'none', stroke: color, 'stroke-width': 1.400 });
  line(green, '#0b8f22');
  line(blue, '#1660c8');
  line(pink, '#c9707f');
  tag(svg, 1829, 826, 1872, 838, '66.3729', '#ff8a99', '#333');
  tag(svg, 1829, 875, 1872, 887, '12.8825', '#12bf3f', '#fff');
})();
```
